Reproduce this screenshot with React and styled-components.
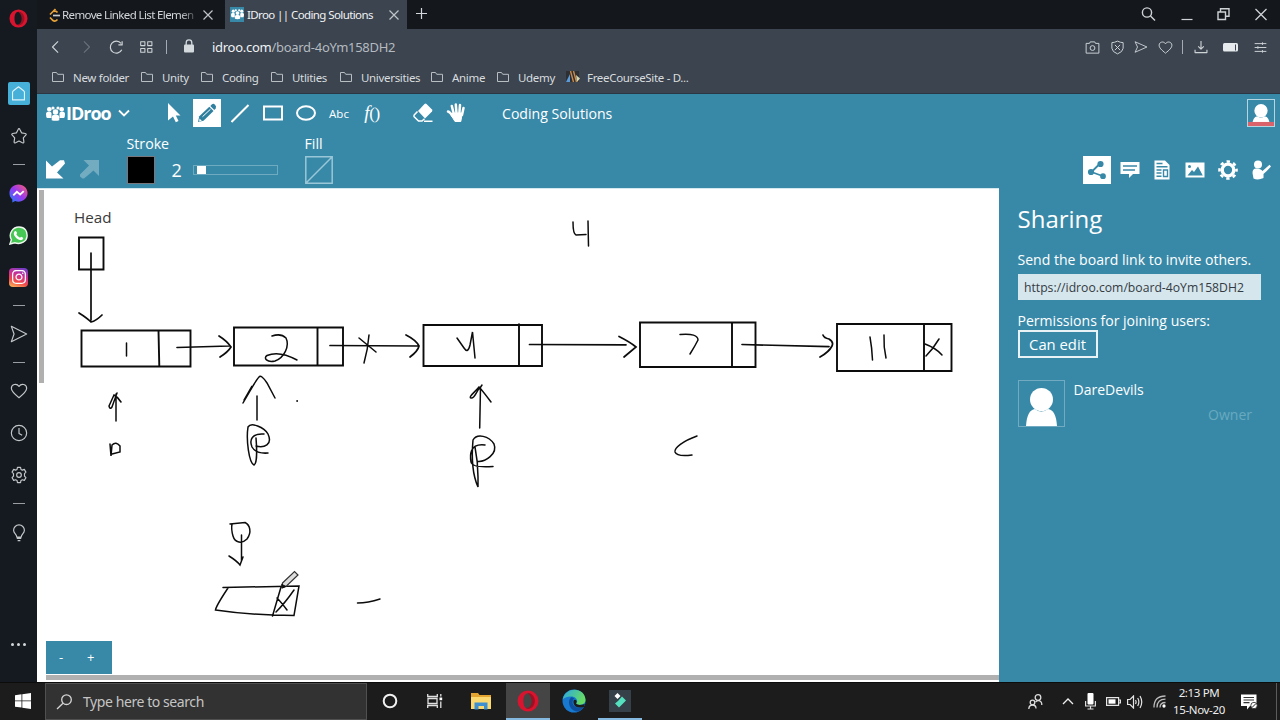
import React from "react"
import styled, { createGlobalStyle } from "styled-components"
import { FaInstagram } from "react-icons/fa"

const bookmarks = [
  { title: "New folder", width: 89 },
  { title: "Unity", width: 60 },
  { title: "Coding", width: 70 },
  { title: "Utlities", width: 69 },
  { title: "Universities", width: 91 },
  { title: "Anime", width: 66 },
  { title: "Udemy", width: 69 },
]

const boxes = [
  "M79 237.500h24.500v32H79z",
  "M81.500 330.500h109v36h-109zM158.500 330.500l.8 36",
  "M234 327.500h109v38H234zM317.500 327.500v38",
  "M423.500 325H542v41H423.500zM519 323.500v42.500",
  "M640 322.500h115.500V367H640zM732 322.500V367",
  "M837 324h114.500v47H837zM924 324v47",
]

const arrows = [
  "M91 253v67M79 313Q87 318 91 322Q96 321 102 315",
  "M177 347.500L229 346M219 336Q227 341 231 347Q228 352 220 357",
  "M330 345.500L418 346M406 335Q416 340 419 346Q418 351 410 357",
  "M529.500 344.500L626 344.800M619 336.500Q630 342 636 347L624 357",
  "M742 344.500L829 346.600M823 335Q824 338 829 339Q834 342 832 346Q829 352 820 357",
]

const handwriting = [
  "M126.500 343v13",
  "M272 336Q281 333 286 338C290 346 284 358 275 361C267 363 263 358 267 355.500C275 352 286 354 297 360",
  "M359 338L376 352M369 335Q368 349 364 363",
  "M457 338L464 348Q468 354 470 345L472.500 332L475 358",
  "M680 334.500Q698 333 698 340Q695 346 690 354",
  "M870 337Q872 348 872.500 360M884 335Q883.500 347 886 358",
  "M925 344Q936 348 942 355M939 339Q933 349 926 356",
  "M573 222Q573 234 576 235L586 234.500M588 221L588.500 246",
  "M116 421L116 394M121 402Q118 397 114 395L109 406Q110 410 112 407L117 393",
  "M110 444L111 456L112 445Q116 441 120 446L120 452L112 454",
  "M243 403Q256 380 259 377Q261 374 267 383L275 398M244 400L252 386L245 399M257 396V420",
  "M248 427C246 440 249 463 254 465C257 464 257 450 256 438M248 427C251 422 264 427 268 434C273 445 264 448 256 446M264 434C252 433 249 440 252 447Q256 454 268 453",
  "M480.500 387L479.700 428M491 402Q482 390 479 387C475 392 468 397 471 398C475 399 476 391 480 388L482 385",
  "M473 440C477 433 489 436 494 444C498 454 485 462 478 461.500M473 440C471 462 474 478 478 487L478 477Q478 462 475 447M485 445C469 443 470 456 471 462Q472 468 493 466.500",
  "M697 436C683 441 674 448 675 452Q677 457 692 455",
  "M230 524L245 522.500C250 525 252 532 247 539C242 544 235 543 233 536Q231 529 232 524M241.500 535V561M229 556Q237 561 240 565L243 557",
  "M223 587.500L299 586L294 615.500L273 615Q242 614 215.500 610Q216 606 228 588M281 587L272.500 616M277 598Q281 602 287 610M294 590Q285 603 276 612",
  "M357.500 603Q368 603 380 599",
]

const App = () => {
  return (
    <Screen>
      <GlobalStyle />
      <Workspace>
        <Sidebar />
        <Browser>
          <Tabs />
          <AddressBar />
          <Bookmarks />
          <Board />
        </Browser>
      </Workspace>
      <Taskbar />
    </Screen>
  )
}

export default App

const OperaLogo = ({ size }) => (
  <svg width={size} height={size} viewBox="0 0 20 20">
    <path
      fillRule="evenodd"
      fill="#d8142f"
      d="M10 0.500a9.500 9.500 0 1 0 0 19a9.500 9.500 0 1 0 0-19zM10 3c3 0 4.200 3.500 4.200 7s-1.200 7-4.200 7s-4.200-3.500-4.200-7s1.200-7 4.200-7z"
    />
    <path fill="#9c1022" d="M14 4.500c3 3 3 8 0 11c-2 2-5 1.800-6 .6c5 1.500 8-8 2-13c1.500-.2 3 .4 4 1.400z" />
  </svg>
)

const Line = ({ size = 18, sw = 1.3, d, children, ...rest }) => (
  <svg
    width={size}
    height={size}
    viewBox="0 0 20 20"
    fill="none"
    stroke="currentColor"
    strokeWidth={sw}
    strokeLinejoin="round"
    {...rest}
  >
    {d ? <path d={d} /> : null}
    {children}
  </svg>
)

const heart = "M10 17.500C5 13.500 1.500 10.500 1.500 7C1.500 2.500 7.500 1 10 5C12.500 1 18.500 2.500 18.500 7C18.500 10.500 15 13.500 10 17.500z"
const plane = "M1.500 1.500L18.500 10L1.500 18.500L4.500 10z"

const Sidebar = () => (
  <Side>
    <SideCell h={37}>
      <OperaLogo size={19} />
    </SideCell>
    <SideCell h={36} />
    <SideCell h={41}>
      <HomeTile>
        <Line size={17} d="M3 8.500Q3 7.500 4 6.700L10 2L16 6.700Q17 7.500 17 8.500V17.500H3z" />
      </HomeTile>
    </SideCell>
    <SideCell h={43}>
      <Line d="M10 1.800Q10.600 1.800 11 2.800L12.800 6.500L17 7.200Q18.800 7.600 17.500 9L14.800 12L15.400 16.300Q15.500 18.300 13.800 17.500L10 15.600L6.200 17.500Q4.500 18.300 4.600 16.300L5.200 12L2.500 9Q1.200 7.600 3 7.200L7.200 6.500L9 2.800Q9.400 1.800 10 1.800z" />
    </SideCell>
    <Dash />
    <SideCell>
      <svg width="19" height="19" viewBox="0 0 20 20">
        <defs>
          <linearGradient id="msg" x1="0" y1="1" x2="1" y2="0">
            <stop offset="0" stopColor="#1685ff" />
            <stop offset=".5" stopColor="#9a38f0" />
            <stop offset="1" stopColor="#ff6068" />
          </linearGradient>
        </defs>
        <path fill="url(#msg)" d="M10 .5C4.500.5.5 4.500.5 9.500c0 3 1 5 3 6.700V19.500l3-1.500c6 2 13-1.500 13-8.500C19.500 4.500 15.500.5 10 .5z" />
        <path fill="none" stroke="#fff" strokeWidth="2" d="M4.500 12L8.300 8.200L11.700 11L15.500 7.500" />
      </svg>
    </SideCell>
    <SideCell>
      <svg width="19" height="19" viewBox="0 0 20 20">
        <path fill="#45c655" stroke="#eef6ee" strokeWidth="1.500" d="M1 19L2.500 14.500C-1 8 4 1 10.500 1S19.500 6 19 11S13 20 6 17.600z" />
        <path fill="#fff" d="M6 5.500Q7.500 4.500 8.400 7.200Q8.500 8 7.700 8.800Q9 11.500 11.600 12.400L12.800 11.300Q15 12 15 13Q14 16 10.500 14.500Q6 12.500 5 8.500Q5 6.500 6 5.500z" />
      </svg>
    </SideCell>
    <SideCell>
      <InstaTile>
        <FaInstagram size={16} />
      </InstaTile>
    </SideCell>
    <Dash />
    <SideCell>
      <Line d={plane} />
    </SideCell>
    <Dash />
    <SideCell>
      <Line d={heart} />
    </SideCell>
    <SideCell>
      <Line>
        <circle cx="10" cy="10" r="8.500" />
        <path d="M10 4.500V10.500L13.500 12.500" />
      </Line>
    </SideCell>
    <SideCell>
      <Line d="M8.300 1.500h3.400l.5 2.300l1.500.8l2.200-.8l1.800 3l-1.600 1.700v2.800l1.600 1.700l-1.800 3l-2.200-.7l-1.500.8l-.5 2.400H8.300l-.5-2.400l-1.500-.8l-2.200.7l-1.800-3l1.600-1.700V8.500L2.300 6.800l1.800-3l2.200.8l1.500-.8z">
        <circle cx="10" cy="10" r="2.600" />
      </Line>
    </SideCell>
    <Dash />
    <SideCell h={44}>
      <Line d="M7.500 14.500C7.500 11.500 4 10.500 4 7A6 6 0 0 1 16 7C16 10.500 12.500 11.500 12.500 14.500zM7.500 16h5M8.500 18.500h3" />
    </SideCell>
    <Dots>
      <i />
      <i />
      <i />
    </Dots>
  </Side>
)

const Tabs = () => (
  <TabStrip>
    <Tab w={188}>
      <svg width="13" height="14" viewBox="0 0 13 14" fill="none" strokeWidth="1.700">
        <path stroke="#e8a23a" d="M7.500 1L5 3.500M2 9.500L5 12.500Q7 14 9.500 11.500M5 3.500L2 6.500" />
        <path stroke="#c9c9c9" d="M5 7.500h7" />
        <path stroke="#e8a23a" d="M5.500 3.500Q8 2.500 9.500 4.500" />
      </svg>
      <TabTitle w={134} fade="true">Remove Linked List Elemen</TabTitle>
      <Cross />
    </Tab>
    <Tab w={182} active="true">
      <Favicon>
        <Crowd w={13} />
      </Favicon>
      <TabTitle w={142}>IDroo || Coding Solutions</TabTitle>
      <Cross />
    </Tab>
    <NewTab>
      <svg width="11" height="11" viewBox="0 0 11 11" stroke="#d5d8da" strokeWidth="1.200">
        <path d="M5.500 0v11M0 5.500h11" />
      </svg>
    </NewTab>
    <WindowButtons>
      <svg width="16" height="16" viewBox="0 0 16 16" fill="none" stroke="#d0d3d6" strokeWidth="1.400">
        <circle cx="7" cy="5.500" r="4.600" />
        <path d="M10.500 9l4.500 4.500" />
      </svg>
      <svg width="12" height="16" viewBox="0 0 12 16" stroke="#d0d3d6" strokeWidth="1.200">
        <path d="M0.500 12.500h11" />
      </svg>
      <svg width="13" height="16" viewBox="0 0 13 16" fill="none" stroke="#d0d3d6" strokeWidth="1.400">
        <path d="M1 5h7.500v7.500H1zM3.500 5V1.700H12v7.500H8.500" />
      </svg>
      <svg width="12" height="16" viewBox="0 0 12 16" stroke="#d0d3d6" strokeWidth="1.300">
        <path d="M0.500 2l11 11M11.500 2l-11 11" />
      </svg>
    </WindowButtons>
  </TabStrip>
)

const Cross = () => (
  <svg width="10" height="10" viewBox="0 0 10 10" stroke="#bfc4c9" strokeWidth="1.200">
    <path d="M.5.5l9 9M9.500.5l-9 9" />
  </svg>
)

// group of people used by the logo and the tab icon
const Crowd = ({ w }) => (
  <svg width={w} height={(w * 15) / 19} viewBox="0 0 19 15" fill="#fff">
    <circle cx="3.300" cy="3.200" r="2.300" />
    <circle cx="15.700" cy="3.200" r="2.300" />
    <circle cx="7" cy="2" r="1.600" />
    <circle cx="12" cy="2" r="1.600" />
    <path d="M0 8Q0 5.500 3 5.500Q5 5.500 5.500 7v5H1Q0 11 0 8zM19 8Q19 5.500 16 5.500Q14 5.500 13.500 7v5H18Q19 11 19 8z" />
    <circle cx="9.500" cy="6" r="2.700" />
    <path d="M5.700 11.500Q5.700 9 8 8.800h3Q13.300 9 13.300 11.500v2.700Q9.500 15.500 5.700 14.200z" />
  </svg>
)

const AddressBar = () => (
  <Address>
    <NavIcons>
      <Line size={14} sw={1.600} d="M13 2L5 10L13 18" />
      <Dim>
        <Line size={14} sw={1.600} d="M7 2L15 10L7 18" />
      </Dim>
      <Line size={15} sw={1.600} d="M17 13A8 8 0 1 1 16 4.500M17.500 1.500V6.500H12.500" />
      <Line size={14} sw={1.500} d="M1 2.500h6v5.500H1zM11 2.500h6v5.500h-6zM1 12h6v5.500H1zM11 12h6v5.500h-6z" />
    </NavIcons>
    <Bar />
    <Lock>
      <svg width="10" height="14" viewBox="0 0 10 14">
        <rect y="5.500" width="10" height="8" rx="1" fill="#d3d9dc" />
        <path d="M2.200 6V3.700a2.800 2.800 0 0 1 5.600 0V6" fill="none" stroke="#d3d9dc" strokeWidth="1.300" />
      </svg>
    </Lock>
    <Url>
      idroo.com<span>/board-4oYm158DH2</span>
    </Url>
    <AddressActions>
      <Line size={15} d="M1.500 4.500H6L7 2.500h6l1 2h4.500V17.500h-17z">
        <circle cx="10" cy="10.700" r="3.200" />
      </Line>
      <Line size={15} d="M10 1.500Q14 3.500 17.500 3.500V11Q17 16 10 18.500Q3 16 2.500 11V3.500Q6 3.500 10 1.500zM6.500 6.500l7 7M13.500 6.500l-7 7" />
      <Line size={14} d="M1.500 2.500L18.500 10L1.500 17.500L5 10z" />
      <Line size={15} d={heart} />
      <Bar />
    </AddressActions>
    <BrowserMenu>
      <Line size={14} sw={1.600} d="M10 1.500V12.500M6 9l4 4l4-4M1.500 14v4h17v-4" />
      <svg width="16" height="9" viewBox="0 0 16 9">
        <rect width="15" height="8.600" rx="1.500" fill="#e6eaec" />
        <path d="M12.500 1.500v6" stroke="#3b444f" />
      </svg>
      <Line size={13} sw={1.500} d="M1 4h18M1 10h18M1 16h18M13 2v4M6 8v4M13 14v4" />
    </BrowserMenu>
  </Address>
)

const Bookmarks = () => (
  <BookmarkRow>
    {bookmarks.map((item, index) => (
      <Bookmark key={index} w={item.width}>
        <svg width="12" height="10" viewBox="0 0 12 10" fill="none" stroke="#b9bec3">
          <path d="M.5.500h4l1.200 1.800h5.800v7.200H.5z" />
        </svg>
        {item.title}
      </Bookmark>
    ))}
    <Bookmark w={130} site="true">
      <svg width="14" height="12" viewBox="0 0 14 12">
        <rect width="13" height="11" fill="#2d2f33" />
        <path d="M0 11L4 3V11z" fill="#5a9ad8" />
        <path d="M4.500 0l3 11M7.500 0l3 11" stroke="#c98a4b" strokeWidth="1.400" />
        <path d="M10 4l4 3.500l-3 3.500z" fill="#d8d8b0" />
      </svg>
      FreeCourseSite - D...
    </Bookmark>
  </BookmarkRow>
)

const Person = ({ size, bar }) => (
  <svg width={size} height={size} viewBox="0 0 45 45">
    <path fill="#fff" d="M7 45Q8 29 16 28Q22 33 29 28Q37 29 38 45z" />
    <circle cx="22.500" cy="18.500" r="11.500" fill="#fff" />
    {bar ? <path fill="#d9626b" d="M0 38h45v7H0z" /> : null}
  </svg>
)

const Board = () => (
  <BoardApp>
    <Toolbar>
      <ToolbarTop>
        <Logo>
          <Crowd w={19} />
          IDroo
        </Logo>
        <Chevron>
          <svg width="12" height="8" viewBox="0 0 12 8" fill="none" stroke="#fff" strokeWidth="1.800">
            <path d="M1 1.500L6 6.500L11 1.500" />
          </svg>
        </Chevron>
        <Tools>
          <Tool>
            <svg width="14" height="20" viewBox="0 0 14 20" fill="#fff">
              <path d="M1 0L13.500 12.500H8.800L11.500 18L8.800 19.300L6 13.500L1 17.500z" />
            </svg>
          </Tool>
          <Tool active="true">
            <svg width="20" height="20" viewBox="0 0 20 20" fill="#2f7f9f">
              <path d="M1 19L2.300 13.300L12.300 3.800L16.500 8L6.500 17.800z" />
              <path d="M13.300 2.900L15 1.200Q16.500.3 18 1.700Q19.800 3.500 18.700 5.200L17.300 7z" />
              <path d="M5.500 13.700l8-7.500" stroke="#fff" fill="none" />
              <path d="M2.500 15.500l2.300 2.300l-2.600.6z" fill="#fff" />
            </svg>
          </Tool>
          <Tool>
            <svg width="19" height="19" viewBox="0 0 19 19" stroke="#fff" strokeWidth="2">
              <path d="M.5 18L17.500 1" />
            </svg>
          </Tool>
          <Tool>
            <svg width="20" height="16" viewBox="0 0 20 16" fill="none" stroke="#fff" strokeWidth="2">
              <path d="M1 1.500h18v13H1z" />
            </svg>
          </Tool>
          <Tool>
            <svg width="20" height="16" viewBox="0 0 20 16" fill="none" stroke="#fff" strokeWidth="2">
              <ellipse cx="10" cy="8" rx="9" ry="6.800" />
            </svg>
          </Tool>
          <Tool>
            <Abc>Abc</Abc>
          </Tool>
          <Tool>
            <Fx>
              <i>f</i>()
            </Fx>
          </Tool>
          <ToolGap />
          <Tool>
            <svg width="20" height="20" viewBox="0 0 20 20" fill="#fff">
              <path d="M11.500 1Q12.500.2 13.500 1L19 6.500Q19.700 7.500 19 8.500L12 15.500L5 8z" />
              <path d="M4.500 8.500L1.200 12Q.7 13 1.200 13.700L5.500 18H9L11.500 15.800" fill="none" stroke="#fff" strokeWidth="1.500" />
              <path d="M11 17.500h8.500V19H11z" />
            </svg>
          </Tool>
          <Tool>
            <svg width="20" height="20" viewBox="0 0 20 20" fill="none" stroke="#fff" strokeWidth="2.500" strokeLinecap="round">
              <path d="M5.800 3l2 8M9.800 1.500l.7 9M14 2l-.7 9M17.500 5l-1.500 7M2 8.500Q4 9 7 13.500" />
              <path d="M7.500 10h8.800L14.800 18.500H9L5 12z" fill="#fff" strokeWidth="1" />
            </svg>
          </Tool>
        </Tools>
        <BoardTitle>Coding Solutions</BoardTitle>
        <Avatar size={28} light="true">
          <Person size={26} bar />
        </Avatar>
      </ToolbarTop>
      <ToolbarBottom>
        <History>
          <svg width="19" height="19" viewBox="0 0 19 19" fill="#fff">
            <path d="M0 .5L6 6.500L14 .3H18L19 3.500L11 12.500L17.500 18.500H0z" />
          </svg>
          <svg width="19" height="19" viewBox="0 0 19 19" fill="#73acc1">
            <path d="M19 0H3.500L9 5.500L0 14.500V16.500L2.500 18.500H4L13.500 10.500L19 16z" />
          </svg>
        </History>
        <Option w={151}>
          <Caption>Stroke</Caption>
          <OptionRow>
            <Swatch />
            <StrokeSize>2</StrokeSize>
            <Slider>
              <Thumb />
            </Slider>
          </OptionRow>
        </Option>
        <Option w={60}>
          <Caption>Fill</Caption>
          <svg width="28" height="28" viewBox="0 0 28 28" fill="none" stroke="#9ac7d7" strokeWidth="1.500">
            <path d="M.8.8h26.400v26.400H.8zM1 27L27 1" />
          </svg>
        </Option>
        <PanelTabs>
          <Tool active="true">
            <svg width="20" height="20" viewBox="0 0 20 20" fill="#3889a8" stroke="#3889a8" strokeWidth="1.800">
              <path d="M13 3.500L4.500 12L15.500 16" fill="none" />
              <circle cx="13.500" cy="4" r="2.200" />
              <circle cx="4" cy="12" r="2.200" />
              <circle cx="16" cy="16.200" r="2" />
            </svg>
          </Tool>
          <Tool>
            <svg width="20" height="18" viewBox="0 0 20 18">
              <path fill="#fff" d="M.5 1h19v12H13l-4 4v-4H.5z" />
              <path stroke="#3889a8" strokeWidth="1.600" d="M3 5h14M3 9h12" />
            </svg>
          </Tool>
          <Tool>
            <svg width="16" height="20" viewBox="0 0 16 20">
              <path fill="#fff" d="M.5.500H11L15.500 5v14.500H.5z" />
              <path stroke="#3889a8" strokeWidth="1.400" fill="none" d="M2.500 3.500h6M2.500 6.700h11M2.500 10h5M2.500 13h5M2.500 16.300h5M9.500 10h4v6.500h-4z" />
            </svg>
          </Tool>
          <Tool>
            <svg width="20" height="16" viewBox="0 0 20 16">
              <path fill="#fff" d="M.5.500h19v15H.5z" />
              <circle cx="4.500" cy="4.500" r="1.500" fill="#3889a8" />
              <path fill="#3889a8" d="M2.500 13.500L7 8l2 2l4-5.500l4.800 9z" />
            </svg>
          </Tool>
          <Tool>
            <svg width="20" height="20" viewBox="0 0 20 20" fill="none" stroke="#fff">
              <circle cx="10" cy="10" r="5.800" strokeWidth="3.300" />
              <circle cx="10" cy="10" r="8.500" strokeWidth="2.600" strokeDasharray="3.340" strokeDashoffset="1.670" />
            </svg>
          </Tool>
          <Tool>
            <svg width="20" height="20" viewBox="0 0 20 20" fill="#fff">
              <circle cx="7" cy="4.500" r="4" />
              <path d="M1.500 13Q1.500 8.500 5 8.500Q10 8.500 11.500 11L18.500 4.800L20 6.500Q16 11 12.500 14V18Q7 20.500 2.500 18.500z" />
            </svg>
          </Tool>
        </PanelTabs>
      </ToolbarBottom>
    </Toolbar>
    <BoardBody>
      <Canvas>
        <svg width="961" height="493" viewBox="38 189 961 493" fill="none" stroke="#0c0c0c" strokeLinecap="round">
          <text x="74" y="223" fill="#3a3a3a" stroke="none" fontFamily="Open Sans" fontSize="15.200">
            Head
          </text>
          {boxes.map((d, index) => (
            <path key={index} d={d} strokeWidth="1.900" strokeLinecap="butt" />
          ))}
          {arrows.map((d, index) => (
            <path key={index} d={d} strokeWidth="1.700" />
          ))}
          {handwriting.map((d, index) => (
            <path key={index} d={d} strokeWidth="1.500" />
          ))}
          <circle cx="297" cy="401" r=".5" />
          <path d="M282.500 583L294.500 571.500L298 575L286.500 586L282 587.500z" fill="#ddd" stroke="#333" strokeWidth="1.200" />
          <path d="M282 584.500L286 586.500L282.500 588z" fill="#111" />
        </svg>
        <ScrollY />
        <ScrollX />
        <Zoom>
          <span>-</span>
          <span>+</span>
        </Zoom>
      </Canvas>
      <Panel>
        <PanelTitle>Sharing</PanelTitle>
        <PanelText>Send the board link to invite others.</PanelText>
        <LinkBox>https://idroo.com/board-4oYm158DH2</LinkBox>
        <PanelText tight="true">Permissions for joining users:</PanelText>
        <EditButton>Can edit</EditButton>
        <User>
          <Avatar size={47}>
            <Person size={45} />
          </Avatar>
          <UserInfo>
            <UserName>DareDevils</UserName>
            <Role>Owner</Role>
          </UserInfo>
        </User>
      </Panel>
    </BoardBody>
  </BoardApp>
)

const Taskbar = () => (
  <Task>
    <TaskCell w={45}>
      <svg width="16" height="16" viewBox="0 0 16 16" fill="#fff">
        <path d="M0 2.200L6.500 1.300V7.500H0zM7.300 1.200L16 0V7.500H7.300zM0 8.300h6.500v6.300L0 13.800zM7.300 8.300H16V16L7.300 14.800z" />
      </svg>
    </TaskCell>
    <SearchBox>
      <svg width="17" height="16" viewBox="0 0 17 16" fill="none" stroke="#d5d5d5" strokeWidth="1.300">
        <circle cx="10.500" cy="5.700" r="4.800" />
        <path d="M7 9.200L1 15" />
      </svg>
      Type here to search
    </SearchBox>
    <TaskCell w={46}>
      <svg width="16" height="16" viewBox="0 0 16 16" fill="none" stroke="#f0f0f0" strokeWidth="2">
        <circle cx="8" cy="8" r="6.300" />
      </svg>
    </TaskCell>
    <TaskCell w={43}>
      <svg width="16" height="14" viewBox="0 0 16 14" fill="none" stroke="#e0e0e0" strokeWidth="1.300">
        <path d="M.7 0v2.500h9.600V0M1 4.500h9v5H1zM.7 14v-2.500h9.600V14M13.800 0v2.500M13.800 7.500V14" />
        <path d="M12.500 3.500h2.700v2.700h-2.700z" fill="#fff" stroke="none" />
      </svg>
    </TaskCell>
    <TaskCell w={50}>
      <svg width="20" height="18" viewBox="0 0 20 18">
        <path fill="#e3a530" d="M0 1h7l1.500 2H20v14H0z" />
        <path fill="#fbd870" d="M0 5h20v12H0z" />
        <path fill="#3d8fd0" d="M3.500 17V10.500h13V17.500H13V14H7.500v3.500h-4z" />
      </svg>
    </TaskCell>
    <TaskCell w={44} active="true" line="true">
      <OperaLogo size={22} />
    </TaskCell>
    <TaskCell w={48}>
      <svg width="24" height="24" viewBox="0 0 24 24">
        <defs>
          <linearGradient id="edgeTop" x1="0" y1="0" x2="1" y2=".4">
            <stop offset="0" stopColor="#2aa6e6" />
            <stop offset="1" stopColor="#67dc63" />
          </linearGradient>
        </defs>
        <circle cx="12" cy="12" r="11.500" fill="#1779cf" />
        <path fill="url(#edgeTop)" d="M.7 10.500C3-2.500 23-2.500 23.500 11C23.500 16 16 17 14 14.500C17 12 14 7.500 9.500 7.500C5 7.500 1.500 9 .7 10.500z" />
        <path fill="#0d4f9e" d="M9.500 8C5 11 6.500 21 14.500 22.500C18 22.500 21 20 22 18C17 20 11 18 10.500 13.500C10.500 11 11.500 10 12.500 9.500z" />
        <path fill="#1c1c1c" d="M11.500 12Q12 10 14 11Q15.500 12.500 14 14.500Q16 17 22.800 15L22 18Q13 20 11.500 14z" />
      </svg>
    </TaskCell>
    <TaskCell w={44} line="true">
      <svg width="22" height="22" viewBox="0 0 22 22">
        <path fill="#364049" d="M0 0h22v22H0z" />
        <path fill="#fff" d="M8.500 3l3 3l-3 3l-3-3z" />
        <path fill="#55e0c0" d="M13 6.500l4 4l-7 7l-4-4l3-2.500z" />
      </svg>
    </TaskCell>
    <Tray>
      <TrayIcon w={50}>
        <svg width="15" height="16" viewBox="0 0 15 16" fill="none" stroke="#ddd" strokeWidth="1.300">
          <circle cx="10" cy="3.500" r="2.800" />
          <circle cx="4.500" cy="8.500" r="2.300" />
          <path d="M.8 15Q1 11 4.500 11Q8 11 8 14.500M7.500 8Q9 6.500 11 6.700Q14 7.500 13.800 11" />
        </svg>
      </TrayIcon>
      <TrayIcon w={16}>
        <svg width="12" height="7" viewBox="0 0 12 7" fill="none" stroke="#eee" strokeWidth="1.300">
          <path d="M1 6l5-5l5 5" />
        </svg>
      </TrayIcon>
      <TrayIcon w={28}>
        <svg width="11" height="17" viewBox="0 0 11 17">
          <rect x="2.500" width="6" height="11.500" rx="1" fill="#fff" />
          <path d="M.6 8v5h9.800V8M5.500 13v3M2.500 16h6" fill="none" stroke="#ddd" strokeWidth="1.200" />
        </svg>
      </TrayIcon>
      <TrayIcon w={18}>
        <svg width="15" height="9" viewBox="0 0 15 9">
          <path d="M.6.600h12v7.800h-12zM13 3h1.400v3H13" fill="none" stroke="#e5e5e5" strokeWidth="1.200" />
          <path d="M2.500 2.300h7v4.400h-7z" fill="#fff" />
        </svg>
      </TrayIcon>
      <TrayIcon w={26}>
        <svg width="16" height="14" viewBox="0 0 16 14" fill="none" stroke="#e5e5e5" strokeWidth="1.200">
          <path d="M.6 4.500h2.500L6.500 1v12L3.100 9.500H.6zM8.500 5Q9.700 7 8.500 9M10.700 3Q13 7 10.700 11M13 1Q16.500 7 13 13" />
        </svg>
      </TrayIcon>
      <TrayIcon w={22}>
        <svg width="13" height="13" viewBox="0 0 13 13" fill="none" stroke="#bbb" strokeWidth="1.300">
          <path d="M1 12.500Q1 1 12.500 1M4 12.500Q4 4.200 12.500 4.200M7 12.500Q7 7.500 12.500 7.500" />
          <circle cx="11" cy="11" r="1" fill="#fff" stroke="#fff" />
        </svg>
      </TrayIcon>
      <Clock>
        <span>2:13 PM</span>
        <span>15-Nov-20</span>
      </Clock>
      <TrayIcon w={42}>
        <svg width="17" height="16" viewBox="0 0 17 16">
          <path fill="#fff" d="M0 .5h15.500v11.500H9l-3 3.500V12H0z" />
          <path stroke="#333" strokeWidth="1.200" d="M2.500 3.500h10.500M2.500 6h10.500M2.500 8.600h6" />
          <circle cx="13" cy="11.500" r="3.200" fill="#fff" stroke="#222" strokeWidth=".8" />
          <path stroke="#222" d="M11 13.500l4-4" />
        </svg>
      </TrayIcon>
    </Tray>
    <ShowDesktop />
  </Task>
)

const GlobalStyle = createGlobalStyle`
  * {
    box-sizing: border-box;
  }

  body {
    margin: 0;
    overflow: hidden;
    font-family: "Noto Sans", "Open Sans", sans-serif;
  }

  svg {
    display: block;
    flex-shrink: 0;
  }
`

const Screen = styled.div`
  display: flex;
  flex-direction: column;
  width: 1280px;
  height: 720px;
  background: #1c1c1c;
`

const Workspace = styled.div`
  display: flex;
  height: 682px;
`

const Side = styled.aside`
  display: flex;
  flex-direction: column;
  width: 37px;
  height: 100%;
  background: #151a20;
  color: #c3c7ca;
`

const SideCell = styled.div`
  display: flex;
  align-items: center;
  justify-content: center;
  flex-shrink: 0;
  height: ${({ h }) => h || 42}px;
`

const HomeTile = styled.div`
  display: flex;
  align-items: center;
  justify-content: center;
  width: 22px;
  height: 23px;
  border-radius: 2px;
  background: #46b0d9;
  color: #dff3fb;
`

const InstaTile = styled.div`
  display: flex;
  align-items: center;
  justify-content: center;
  width: 19px;
  height: 19px;
  border-radius: 4px;
  color: #fff;
  background: linear-gradient(200deg, #6a3fc9 5%, #cf2f92 40%, #f04a4a 68%, #fbc45c 100%);
`

const Dash = styled.div`
  width: 12px;
  height: 1px;
  margin: 7px auto;
  flex-shrink: 0;
  background: #9a9ea2;
`

const Dots = styled.div`
  display: flex;
  justify-content: center;
  gap: 3px;
  margin: auto 0 36px;

  i {
    width: 3px;
    height: 3px;
    border-radius: 50%;
    background: #d5d8da;
  }
`

const Browser = styled.main`
  display: flex;
  flex-direction: column;
  width: 1243px;
`

const TabStrip = styled.div`
  display: flex;
  height: 29px;
  background: #14181d;
`

const Tab = styled.div`
  display: flex;
  align-items: center;
  width: ${({ w }) => w}px;
  padding: 0 8px 0 ${({ active }) => (active ? "5px" : "11px")};
  background: ${({ active }) => (active ? "#3b444f" : "transparent")};
`

const TabTitle = styled.div`
  width: ${({ w }) => w}px;
  margin: 0 ${({ fade }) => (fade ? "7px 0 1px" : "0 0 3px")};
  flex: none;
  white-space: nowrap;
  font-size: 11.500px;
  letter-spacing: ${({ fade }) => (fade ? "-0.620px" : "-0.600px")};
  color: ${({ fade }) => (fade ? "#d3d6d9" : "#f0f2f4")};
  -webkit-mask-image: ${({ fade }) =>
    fade ? "linear-gradient(90deg, #000 88%, rgba(0, 0, 0, 0.2) 100%)" : "none"};
`

const Favicon = styled.div`
  display: flex;
  align-items: center;
  justify-content: center;
  width: 15px;
  height: 15px;
  background: #3889a8;
`

const NewTab = styled.div`
  display: flex;
  align-items: center;
  padding: 0 0 2px 9px;
`

const WindowButtons = styled.div`
  display: flex;
  align-items: center;
  gap: 24.700px;
  margin-left: auto;
  padding-right: 13px;
`

const Address = styled.div`
  display: flex;
  align-items: center;
  height: 36px;
  background: #3b444f;
  color: #cfd3d6;
`

const NavIcons = styled.div`
  display: flex;
  align-items: center;
  gap: 16px;
  padding-left: 12px;
  width: 129px;
`

const Dim = styled.div`
  color: #69717a;
`

const Bar = styled.div`
  width: 1px;
  height: 14px;
  background: #a5abb0;
`

const Lock = styled.div`
  padding: 0 18px 2px 17px;
`

const Url = styled.div`
  font-size: 13px;
  letter-spacing: -0.280px;
  color: #f0f2f4;

  span {
    color: #b5bac0;
  }
`

const AddressActions = styled.div`
  display: flex;
  align-items: center;
  gap: 9.500px;
  margin-left: auto;
`

const BrowserMenu = styled.div`
  display: flex;
  align-items: center;
  gap: 15px;
  padding: 0 13px 0 11px;
`

const BookmarkRow = styled.div`
  display: flex;
  align-items: center;
  height: 29px;
  padding: 0 0 4px 15px;
  background: #3b444f;
  border-bottom: 1px solid #2b3742;
`

const Bookmark = styled.div`
  display: flex;
  align-items: center;
  gap: ${({ site }) => (site ? "7px" : "9px")};
  width: ${({ w }) => w}px;
  font-size: 11.500px;
  letter-spacing: -0.320px;
  white-space: nowrap;
  color: #d9dcdf;
`

const BoardApp = styled.section`
  display: flex;
  flex-direction: column;
  height: 588px;
  font-family: "Open Sans", sans-serif;
  color: #fff;
  background: #3889a8;
`

const Toolbar = styled.header`
  height: 94px;
  padding-left: 9px;
`

const ToolbarTop = styled.div`
  display: flex;
  align-items: center;
  height: 38px;
  padding-right: 5px;
`

const Logo = styled.div`
  display: flex;
  align-items: center;
  gap: 1px;
  width: 72px;
  font-size: 18px;
  font-weight: 700;
  letter-spacing: -1px;
`

const Chevron = styled.div`
  width: 42px;
`

const Tools = styled.div`
  display: flex;
  gap: 5px;
  width: 342px;
`

const Tool = styled.div`
  display: flex;
  align-items: center;
  justify-content: center;
  flex-shrink: 0;
  width: 28px;
  height: 28px;
  background: ${({ active }) => (active ? "#fff" : "transparent")};
`

const ToolGap = styled.div`
  width: 13px;
`

const Abc = styled.span`
  font-size: 11.500px;
`

const Fx = styled.span`
  font-family: "Liberation Serif", serif;
  font-size: 17px;
  letter-spacing: -0.300px;

  i {
    font-size: 19px;
  }
`

const BoardTitle = styled.h1`
  margin: 0;
  font-size: 14.100px;
  font-weight: 400;
`

const Avatar = styled.div`
  width: ${({ size }) => size}px;
  height: ${({ size }) => size}px;
  flex-shrink: 0;
  margin-left: ${({ light }) => (light ? "auto" : "0")};
  border: 1px solid ${({ light }) => (light ? "#b5d5e1" : "#72abc1")};
`

const ToolbarBottom = styled.div`
  display: flex;
  height: 55px;
`

const History = styled.div`
  display: flex;
  gap: 15px;
  width: 80.500px;
  padding-top: 28px;
`

const Option = styled.div`
  display: flex;
  flex-direction: column;
  width: ${({ w }) => w}px;
  margin-right: 27px;
`

const Caption = styled.div`
  height: 24px;
  line-height: 24px;
  font-size: 14.200px;
`

const OptionRow = styled.div`
  display: flex;
  align-items: center;
`

const Swatch = styled.div`
  width: 28px;
  height: 28px;
  border: 1.500px solid #77777c;
  background: #000;
`

const StrokeSize = styled.div`
  width: 38px;
  padding-left: 17px;
  font-size: 18px;
  line-height: 26px;
`

const Slider = styled.div`
  width: 85px;
  height: 10px;
  border: 1px solid #6fabc0;
`

const Thumb = styled.div`
  width: 9px;
  height: 8px;
  margin-left: 3px;
  background: #fff;
`

const PanelTabs = styled.div`
  display: flex;
  gap: 4.700px;
  margin-left: auto;
  padding: 24px 5.500px 0 0;
`

const BoardBody = styled.div`
  display: flex;
  height: 494px;
`

const Canvas = styled.div`
  position: relative;
  width: 962px;
  height: 494px;
  padding-left: 1px;
  background: #fff;
  border-top: 1px solid #d5e8ee;
`

const ScrollY = styled.div`
  position: absolute;
  left: 2px;
  top: 1px;
  width: 5px;
  height: 193px;
  background: #b0b0b0;
`

const ScrollX = styled.div`
  position: absolute;
  left: 9px;
  right: 0;
  bottom: 2px;
  height: 5px;
  background: #b0b0b0;
`

const Zoom = styled.div`
  position: absolute;
  left: 9px;
  bottom: 8px;
  display: flex;
  align-items: center;
  width: 66px;
  height: 33px;
  background: #3889a8;
  font-size: 13px;

  span {
    width: 28px;
    padding: 0 0 2px 13px;
  }
`

const Panel = styled.aside`
  width: 281px;
  padding: 14px 19px 0 18.500px;
`

const PanelTitle = styled.h2`
  margin: 0;
  font-size: 24px;
  font-weight: 400;
  line-height: 34px;
`

const PanelText = styled.div`
  margin-top: ${({ tight }) => (tight ? "11px" : "14px")};
  line-height: 19px;
  font-size: 14.050px;
  font-weight: 500;
  white-space: nowrap;
`

const LinkBox = styled.div`
  height: 26px;
  margin-top: 5px;
  padding-left: 6.500px;
  line-height: 27px;
  font-size: 12.200px;
  white-space: nowrap;
  color: #333b42;
  background: #d6e6ed;
`

const EditButton = styled.div`
  display: flex;
  align-items: center;
  justify-content: center;
  width: 80px;
  height: 28px;
  border: 2px solid #e9f3f6;
  font-size: 14.800px;
  font-weight: 500;
`

const User = styled.div`
  display: flex;
  gap: 9px;
  margin-top: 22px;
`

const UserInfo = styled.div`
  display: flex;
  flex-direction: column;
  flex: 1;
`

const UserName = styled.div`
  line-height: 20px;
  font-size: 14px;
  font-weight: 500;
`

const Role = styled.div`
  margin: 5px 9px 0 auto;
  line-height: 20px;
  font-size: 14px;
  color: #69a9bf;
`

const Task = styled.footer`
  display: flex;
  height: 38px;
  border-top: 1px solid #0c0c0c;
  background: #1c1c1c;
`

const TaskCell = styled.div`
  display: flex;
  align-items: center;
  justify-content: center;
  width: ${({ w }) => w}px;
  background: ${({ active }) => (active ? "#454545" : "transparent")};
  border-bottom: ${({ line }) => (line ? "2px solid #86b9e0" : "2px solid transparent")};
`

const SearchBox = styled.div`
  display: flex;
  align-items: center;
  gap: 10px;
  width: 322px;
  height: 37px;
  padding-left: 10px;
  border: 1px solid #505050;
  background: #323232;
  font-size: 14px;
  letter-spacing: -0.420px;
  color: #c5c5c5;
`

const Tray = styled.div`
  display: flex;
  align-items: center;
  margin-left: auto;
  padding-right: 6px;
`

const TrayIcon = styled.div`
  display: flex;
  align-items: center;
  justify-content: center;
  width: ${({ w }) => w}px;
`

const Clock = styled.div`
  display: flex;
  flex-direction: column;
  align-items: center;
  width: 58px;
  padding-bottom: 2px;
  line-height: 17px;
  font-size: 11.500px;
  letter-spacing: -0.350px;
  white-space: nowrap;
  color: #eee;
`

const ShowDesktop = styled.div`
  width: 4px;
  border-left: 1px solid #5c5c5c;
`
